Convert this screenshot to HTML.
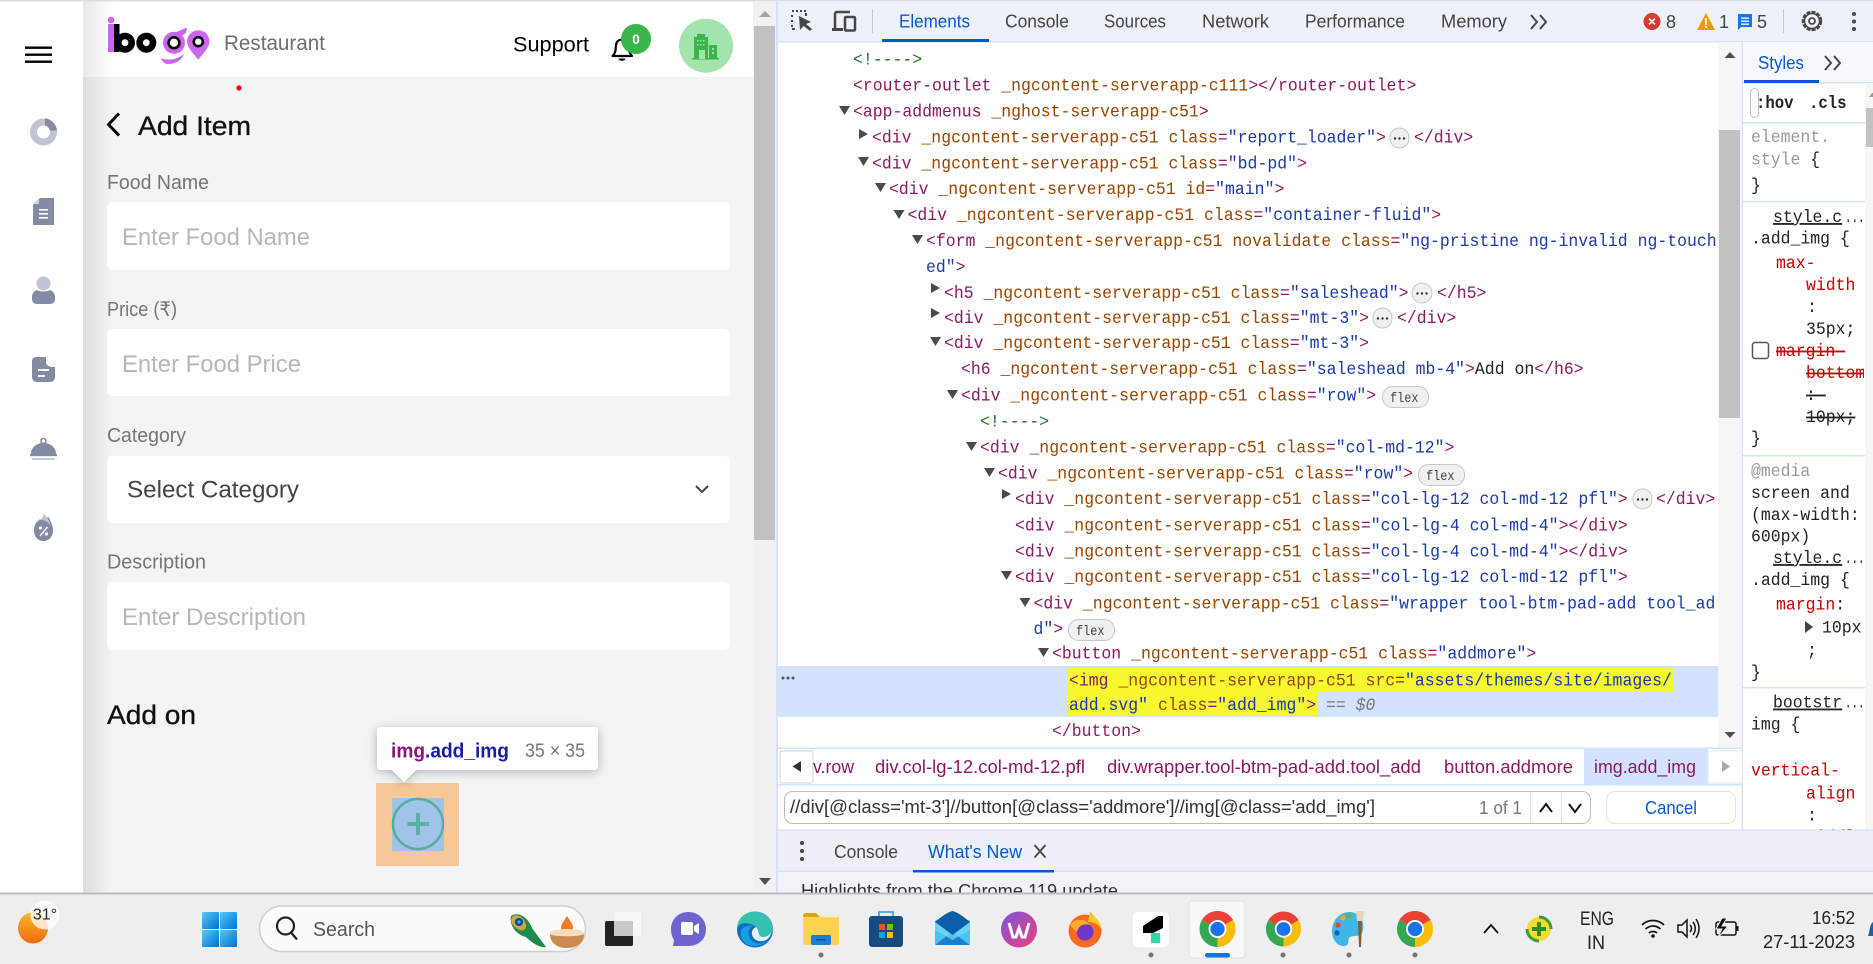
<!DOCTYPE html>
<html><head><meta charset="utf-8"><title>Add Item</title>
<style>
html,body{margin:0;padding:0;width:1873px;height:964px;overflow:hidden;background:#fff}
svg{display:block}
text{white-space:pre}
.s{font-family:"Liberation Sans",sans-serif}
.m{font-family:"Liberation Mono",monospace;font-size:18px}
.t{fill:#8a1a5e}.a{fill:#994500}.v{fill:#1a3aa6}.k{fill:#222}.c{fill:#236e25}.r{fill:#c80000}.g{fill:#999}
</style></head><body>
<svg xmlns="http://www.w3.org/2000/svg" width="1873" height="964" viewBox="0 0 1873 964">
<defs>
<linearGradient id="sh" x1="0" x2="1" y1="0" y2="0"><stop offset="0" stop-color="#000" stop-opacity=".09"/><stop offset="1" stop-color="#000" stop-opacity="0"/></linearGradient>
<linearGradient id="win" x1="0" y1="0" x2="1" y2="1"><stop offset="0" stop-color="#55c8fa"/><stop offset="1" stop-color="#0070cf"/></linearGradient>
<linearGradient id="wea" x1="0" y1="0" x2="0" y2="1"><stop offset="0" stop-color="#f7b62b"/><stop offset="1" stop-color="#f26a0f"/></linearGradient>
<linearGradient id="wps" x1="0" y1="0" x2="1" y2="1"><stop offset="0" stop-color="#7a55e0"/><stop offset="1" stop-color="#ef3f7c"/></linearGradient>
<filter id="ts" x="-20%" y="-40%" width="140%" height="200%"><feDropShadow dx="0" dy="2" stdDeviation="5" flood-color="#000" flood-opacity=".28"/></filter>
<clipPath id="cd"><rect x="778" y="42" width="939" height="706"/></clipPath>
<clipPath id="cs"><rect x="1743" y="83" width="121" height="747"/></clipPath>
<clipPath id="cb"><rect x="780" y="872" width="1093" height="21"/></clipPath>
<symbol id="chrome" viewBox="0 0 48 48">
<path d="M3.2 12A24 24 0 0 1 44.8 12L24 24Z" fill="#ea4335"/>
<path d="M3.2 12A24 24 0 0 0 24 48L24 24Z" fill="#34a853"/>
<path d="M44.8 12A24 24 0 0 1 24 48L24 24Z" fill="#fbbc04"/>
<circle cx="24" cy="24" r="12" fill="#fff"/><circle cx="24" cy="24" r="9.5" fill="#1a73e8"/>
</symbol>
</defs>

<!-- page -->
<rect width="1873" height="964" fill="#fff"/>
<rect x="83" y="0" width="670" height="893" fill="#f4f4f4"/>
<rect x="83" y="1" width="670" height="76" fill="#fff"/>
<rect x="83" y="0" width="30" height="893" fill="url(#sh)"/>
<rect width="1873" height="1.5" fill="#dadce0"/>

<!-- sidebar icons -->
<g fill="#000"><rect x="25" y="46.5" width="27" height="2.4"/><rect x="25" y="53.5" width="27" height="2.4"/><rect x="25" y="60.5" width="27" height="2.4"/></g>
<circle cx="43.5" cy="132" r="10" fill="none" stroke="#bfc3d6" stroke-width="7"/>
<path d="M45 118.3A13.7 13.7 0 0 1 57 130.6L50 130.6A7 7 0 0 0 45 125.2Z" fill="#838ba3"/>
<path d="M40 198H54V225H33V205Z" fill="#838ba3"/><path d="M33 204L39 198V204Z" fill="#cfd2df"/>
<g fill="#fff"><rect x="39" y="209" width="9" height="1.6"/><rect x="39" y="213" width="9" height="1.6"/><rect x="39" y="217" width="9" height="1.6"/></g>
<circle cx="43.5" cy="283.500" r="7" fill="#bfc3d6"/>
<path d="M37 290C40 292 47 292 50 290C53 291 55 294 55 297V299C55 302 53 304 50 304H37C34 304 32 302 32 299V297C32 294 34 291 37 290Z" fill="#838ba3"/>
<path d="M36 357H46V362C46 365 49 367 52 367H55V377C55 380 53 382 50 382H37C34 382 32 380 32 377V361C32 359 34 357 36 357Z" fill="#838ba3"/>
<rect x="38" y="369" width="11" height="2" fill="#fff"/><rect x="38" y="375" width="7" height="2" fill="#fff"/>
<circle cx="43.500" cy="441" r="2.500" fill="none" stroke="#838ba3" stroke-width="1.600"/>
<path d="M31 454C31 447 37 443 43.500 443S56 447 56 454Z" fill="#838ba3"/>
<rect x="30" y="454" width="27" height="2.200" fill="#838ba3"/><rect x="32" y="458" width="23" height="2" fill="#c6c9d8"/>
<path d="M44 513C45 518 48 518 49 517C49 519 53 524 53 530C53 537 49 541 43.500 541S34 537 34 530C34 524 37 522 39 520C40 519 40 519 41 520C42 518 44 516 44 513Z" fill="#838ba3"/>
<path d="M44 513C46 517 50 521 51 526C49 522 45 520 41 520C42 518 44 516 44 513Z" fill="#bfc3d6"/>
<g fill="#fff"><circle cx="40.500" cy="528" r="1.600"/><circle cx="46.500" cy="534" r="1.600"/><path d="M39.500 535.500L47 526.500L48 527.500L40.500 536.500Z"/></g>

<!-- logo -->
<circle cx="111" cy="20" r="3.300" fill="#cc66ee"/>
<rect x="108" y="24" width="6" height="28" fill="#cc66ee"/>
<rect x="114" y="24" width="5.500" height="28" fill="#000"/>
<circle cx="125" cy="42.700" r="6.700" fill="none" stroke="#000" stroke-width="6.600"/>
<circle cx="146.300" cy="42.700" r="6.700" fill="none" stroke="#000" stroke-width="6.600"/>
<circle cx="174" cy="42.700" r="11" fill="#cc66ee"/>
<circle cx="174" cy="42.700" r="5.400" fill="#fff" stroke="#000" stroke-width="2.600"/>
<path d="M174 33L187 27.500L186 33L180 37Z" fill="#cc66ee"/>
<path d="M161 58C168 61 176 60 184 54C182 60 176 64 168 64C164 64 162 61 161 58Z" fill="#cc66ee"/>
<path d="M198.300 30.400C205 30.400 209.500 35.500 209.500 41.500C209.500 47 203 54 198.300 59.500C193.500 54 187 47 187 41.500C187 35.500 192 30.400 198.300 30.400Z" fill="#cc66ee"/>
<circle cx="198.300" cy="41.700" r="4.500" fill="#fff" stroke="#000" stroke-width="2.600"/>
<text class="s" x="224" y="50" font-size="21" fill="#6e6e6e" textLength="101" lengthAdjust="spacingAndGlyphs">Restaurant</text>
<text class="s" x="513" y="51.500" font-size="21.500" fill="#000" textLength="76" lengthAdjust="spacingAndGlyphs">Support</text>
<path d="M612.500 56C617 52 615 47 616.500 43C618 38.500 626 38.500 628 43C629.500 47 628 52 632 56Z" fill="none" stroke="#000" stroke-width="2.200" stroke-linejoin="round"/>
<path d="M618.500 58.500H625.500C625 61.500 619 61.500 618.500 58.500Z" fill="#000"/>
<circle cx="636" cy="39" r="15" fill="#3ab54a"/>
<text class="s" x="636" y="44" font-size="13.500" font-weight="bold" fill="#fff" text-anchor="middle">0</text>
<circle cx="706" cy="45.700" r="27" fill="#a3e4ac"/>
<g fill="#3ab54a"><path d="M694 59V37H697V34H705V37H708V59Z"/><rect x="709" y="45" width="8" height="14"/><rect x="692" y="58" width="27" height="1.500"/></g>
<rect x="699" y="50" width="6" height="9" fill="#a3e4ac"/>
<g fill="#a3e4ac"><rect x="697" y="40" width="1.500" height="1.500"/><rect x="700" y="40" width="1.500" height="1.500"/><rect x="703" y="40" width="1.500" height="1.500"/><rect x="697" y="44" width="1.500" height="1.500"/><rect x="700" y="44" width="1.500" height="1.500"/><rect x="703" y="44" width="1.500" height="1.500"/><rect x="712" y="48" width="2" height="2"/><rect x="712" y="52" width="2" height="2"/></g>
<circle cx="239" cy="88" r="2.700" fill="#e8141c"/>

<!-- form -->
<path d="M119 113.500L108.500 124.500L119 135.500" fill="none" stroke="#000" stroke-width="3"/>
<text class="s" x="138" y="135" font-size="27" fill="#111" stroke="#111" stroke-width=".35" textLength="113" lengthAdjust="spacingAndGlyphs">Add Item</text>
<text class="s" x="107" y="189" font-size="20" fill="#757575" textLength="102" lengthAdjust="spacingAndGlyphs">Food Name</text>
<rect x="107" y="202" width="623" height="68" rx="6" fill="#fff"/>
<text class="s" x="122" y="245" font-size="24" fill="#b7b7b7" textLength="188" lengthAdjust="spacingAndGlyphs">Enter Food Name</text>
<text class="s" x="107" y="316" font-size="20" fill="#757575" textLength="70" lengthAdjust="spacingAndGlyphs">Price (₹)</text>
<rect x="107" y="329" width="623" height="67" rx="6" fill="#fff"/>
<text class="s" x="122" y="372" font-size="24" fill="#b7b7b7" textLength="179" lengthAdjust="spacingAndGlyphs">Enter Food Price</text>
<text class="s" x="107" y="442" font-size="20" fill="#757575" textLength="79" lengthAdjust="spacingAndGlyphs">Category</text>
<rect x="107" y="456" width="623" height="67" rx="6" fill="#fff"/>
<text class="s" x="127" y="497.500" font-size="24" fill="#444" textLength="172" lengthAdjust="spacingAndGlyphs">Select Category</text>
<path d="M696 486L702 492L708 486" fill="none" stroke="#444" stroke-width="2"/>
<text class="s" x="107" y="568.500" font-size="20" fill="#757575" textLength="99" lengthAdjust="spacingAndGlyphs">Description</text>
<rect x="107" y="582" width="623" height="68" rx="6" fill="#fff"/>
<text class="s" x="122" y="625" font-size="24" fill="#b7b7b7" textLength="184" lengthAdjust="spacingAndGlyphs">Enter Description</text>
<text class="s" x="107" y="724" font-size="27" fill="#111" stroke="#111" stroke-width=".35" textLength="89" lengthAdjust="spacingAndGlyphs">Add on</text>

<!-- highlighted img -->
<rect x="376" y="783" width="83" height="83" fill="#f6c898"/>
<rect x="392" y="798" width="52" height="53" fill="#a0c4e8"/>
<circle cx="418" cy="824" r="25" fill="none" stroke="#54ae9f" stroke-width="2.500"/>
<rect x="407.500" y="822" width="21.500" height="4" fill="#5ab0a8"/><rect x="416" y="813" width="4" height="22" fill="#5ab0a8"/>
<g filter="url(#ts)"><path d="M381 727H594A4 4 0 0 1 598 731V766A4 4 0 0 1 594 770H416L404 782L392 770H381A4 4 0 0 1 377 766V731A4 4 0 0 1 381 727Z" fill="#fff"/></g>
<text class="s" x="391" y="757.500" font-size="20" font-weight="bold" textLength="118" lengthAdjust="spacingAndGlyphs"><tspan fill="#881280">img</tspan><tspan fill="#1a1aa6">.add_img</tspan></text>
<text class="s" x="525" y="757" font-size="19" fill="#777" textLength="60" lengthAdjust="spacingAndGlyphs">35 × 35</text>

<!-- page scrollbar -->
<rect x="753" y="1" width="23" height="892" fill="#f1f1f1"/>
<rect x="754" y="26" width="21" height="514" fill="#c1c1c1"/>
<path d="M765 11L771 17H759Z" fill="#a3a3a3"/>
<path d="M759 878H771L765 885Z" fill="#505050"/>

<!-- devtools -->
<rect x="776" y="1" width="1097" height="892" fill="#fff"/>
<rect x="776" y="1" width="2" height="892" fill="#d6e2fb"/>
<rect x="778" y="1" width="1095" height="40.500" fill="#edf1f9"/>
<rect x="778" y="41" width="1095" height="1.500" fill="#d3e3fd"/>
<path d="M792 11H794M796 11H798M800 11H802M804 11H806M792 15V17M792 20V22M792 25V27M792 29H795M806 13V16" stroke="#474747" stroke-width="2" fill="none"/>
<path d="M799 16L800 30L803.500 26L810 31L812 29L806 24L811 22Z" fill="#474747"/>
<path d="M835 29V14C835 12.500 836 12 837 12H850" fill="none" stroke="#474747" stroke-width="2.500"/><rect x="832" y="28" width="11" height="3" fill="#474747"/><rect x="845" y="17" width="10" height="13.500" rx="1" fill="none" stroke="#474747" stroke-width="2.500"/>
<rect x="872" y="9" width="1" height="24" fill="#c4c9d2"/>
<rect x="882" y="39" width="107" height="3" fill="#0b57d0"/>
<text class="s" x="899" y="27.500" font-size="18" fill="#0b57d0" textLength="71" lengthAdjust="spacingAndGlyphs">Elements</text>
<g class="s" font-size="18" fill="#444">
<text x="1005" y="27.500" textLength="64" lengthAdjust="spacingAndGlyphs">Console</text>
<text x="1104" y="27.500" textLength="62" lengthAdjust="spacingAndGlyphs">Sources</text>
<text x="1202" y="27.500" textLength="67" lengthAdjust="spacingAndGlyphs">Network</text>
<text x="1305" y="27.500" textLength="100" lengthAdjust="spacingAndGlyphs">Performance</text>
<text x="1441" y="27.500" textLength="66" lengthAdjust="spacingAndGlyphs">Memory</text>
</g>
<path d="M1531 15L1537 22L1531 29M1540 15L1546 22L1540 29" fill="none" stroke="#474747" stroke-width="2"/>
<circle cx="1652" cy="21.500" r="8.500" fill="#dc362e"/><path d="M1649 18.500L1655 24.500M1655 18.500L1649 24.500" stroke="#fff" stroke-width="1.600"/>
<text class="s" x="1666" y="28" font-size="18" fill="#444" textLength="10" lengthAdjust="spacingAndGlyphs">8</text>
<path d="M1697 30L1706 13L1715 30Z" fill="#f29900"/><rect x="1705" y="18" width="2" height="7" fill="#fff"/><rect x="1705" y="26" width="2" height="2" fill="#fff"/>
<text class="s" x="1711" y="28" font-size="18" fill="#444" dx="8">1</text>
<path d="M1738 14H1752V27H1741L1738 30Z" fill="#1a73e8"/><rect x="1741" y="17.500" width="8" height="1.300" fill="#fff"/><rect x="1741" y="20.500" width="8" height="1.300" fill="#fff"/><rect x="1741" y="23.500" width="8" height="1.300" fill="#fff"/>
<text class="s" x="1757" y="28" font-size="18" fill="#444" textLength="10" lengthAdjust="spacingAndGlyphs">5</text>
<rect x="1783" y="9" width="1" height="24" fill="#c4c9d2"/>
<circle cx="1812" cy="21" r="9" fill="none" stroke="#474747" stroke-width="2.500" stroke-dasharray="4 1.200"/><circle cx="1812" cy="21" r="7.500" fill="none" stroke="#474747" stroke-width="1.500"/><circle cx="1812" cy="21" r="3" fill="none" stroke="#474747" stroke-width="1.800"/>
<g fill="#474747"><circle cx="1854" cy="14" r="2"/><circle cx="1854" cy="21.500" r="2"/><circle cx="1854" cy="29" r="2"/></g>

<!-- DOM tree -->
<rect x="778" y="666" width="940" height="51" fill="#d3e3fd"/>
<rect x="1068" y="668" width="605" height="24" fill="#f8f82f"/>
<rect x="1068" y="692" width="249" height="24" fill="#f8f82f"/>
<g fill="#555"><circle cx="783" cy="678" r="1.500"/><circle cx="788" cy="678" r="1.500"/><circle cx="793" cy="678" r="1.500"/></g>
<g fill="#4a4a4a">
<path d="M839 106H850L844.500 115Z"/><path d="M858 157H869L863.500 166Z"/><path d="M875 183H886L880.500 192Z"/><path d="M893.500 210H904.500L899 219Z"/><path d="M912 235H923L917.500 244Z"/><path d="M930 337H941L935.500 346Z"/><path d="M947 390H958L952.500 399Z"/><path d="M966 442H977L971.500 451Z"/><path d="M984 468H995L989.500 477Z"/><path d="M1001 571H1012L1006.500 580Z"/><path d="M1019.500 598H1030.500L1025 607Z"/><path d="M1038 648H1049L1043.500 657Z"/>
<path d="M859 129L868 134L859 139Z"/><path d="M931 283L940 288L931 293Z"/><path d="M931 308L940 313L931 318Z"/><path d="M1002 489L1011 494L1002 499Z"/>
</g>
<g clip-path="url(#cd)"><g transform="translate(0 -.8)">
<text class="m c" transform="translate(853 65.500) scale(.915 1)">&lt;!----&gt;</text>
<text class="m" transform="translate(853 91.500) scale(.915 1)"><tspan class="t">&lt;router-outlet</tspan><tspan class="a"> _ngcontent-serverapp-c111</tspan><tspan class="t">&gt;&lt;/router-outlet&gt;</tspan></text>
<text class="m" transform="translate(853 117.500) scale(.915 1)"><tspan class="t">&lt;app-addmenus</tspan><tspan class="a"> _nghost-serverapp-c51</tspan><tspan class="t">&gt;</tspan></text>
<text class="m" transform="translate(872 143.500) scale(.915 1)"><tspan class="t">&lt;div</tspan><tspan class="a"> _ngcontent-serverapp-c51 class</tspan><tspan class="t">=</tspan><tspan class="v">"report_loader"</tspan><tspan class="t">&gt;</tspan></text>
<text class="m t" transform="translate(1414 143.500) scale(.915 1)">&lt;/div&gt;</text>
<text class="m" transform="translate(872 169.500) scale(.915 1)"><tspan class="t">&lt;div</tspan><tspan class="a"> _ngcontent-serverapp-c51 class</tspan><tspan class="t">=</tspan><tspan class="v">"bd-pd"</tspan><tspan class="t">&gt;</tspan></text>
<text class="m" transform="translate(889 195) scale(.915 1)"><tspan class="t">&lt;div</tspan><tspan class="a"> _ngcontent-serverapp-c51 id</tspan><tspan class="t">=</tspan><tspan class="v">"main"</tspan><tspan class="t">&gt;</tspan></text>
<text class="m" transform="translate(907.500 221) scale(.915 1)"><tspan class="t">&lt;div</tspan><tspan class="a"> _ngcontent-serverapp-c51 class</tspan><tspan class="t">=</tspan><tspan class="v">"container-fluid"</tspan><tspan class="t">&gt;</tspan></text>
<text class="m" transform="translate(926 247) scale(.915 1)"><tspan class="t">&lt;form</tspan><tspan class="a"> _ngcontent-serverapp-c51 novalidate class</tspan><tspan class="t">=</tspan><tspan class="v">"ng-pristine ng-invalid ng-touch</tspan></text>
<text class="m" transform="translate(926 273) scale(.915 1)"><tspan class="v">ed"</tspan><tspan class="t">&gt;</tspan></text>
<text class="m" transform="translate(944 299) scale(.915 1)"><tspan class="t">&lt;h5</tspan><tspan class="a"> _ngcontent-serverapp-c51 class</tspan><tspan class="t">=</tspan><tspan class="v">"saleshead"</tspan><tspan class="t">&gt;</tspan></text>
<text class="m t" transform="translate(1437 299) scale(.915 1)">&lt;/h5&gt;</text>
<text class="m" transform="translate(944 324) scale(.915 1)"><tspan class="t">&lt;div</tspan><tspan class="a"> _ngcontent-serverapp-c51 class</tspan><tspan class="t">=</tspan><tspan class="v">"mt-3"</tspan><tspan class="t">&gt;</tspan></text>
<text class="m t" transform="translate(1397 324) scale(.915 1)">&lt;/div&gt;</text>
<text class="m" transform="translate(944 349) scale(.915 1)"><tspan class="t">&lt;div</tspan><tspan class="a"> _ngcontent-serverapp-c51 class</tspan><tspan class="t">=</tspan><tspan class="v">"mt-3"</tspan><tspan class="t">&gt;</tspan></text>
<text class="m" transform="translate(961 375) scale(.915 1)"><tspan class="t">&lt;h6</tspan><tspan class="a"> _ngcontent-serverapp-c51 class</tspan><tspan class="t">=</tspan><tspan class="v">"saleshead mb-4"</tspan><tspan class="t">&gt;</tspan><tspan class="k">Add on</tspan><tspan class="t">&lt;/h6&gt;</tspan></text>
<text class="m" transform="translate(961 401.500) scale(.915 1)"><tspan class="t">&lt;div</tspan><tspan class="a"> _ngcontent-serverapp-c51 class</tspan><tspan class="t">=</tspan><tspan class="v">"row"</tspan><tspan class="t">&gt;</tspan></text>
<text class="m c" transform="translate(980 427.500) scale(.915 1)">&lt;!----&gt;</text>
<text class="m" transform="translate(980 453.500) scale(.915 1)"><tspan class="t">&lt;div</tspan><tspan class="a"> _ngcontent-serverapp-c51 class</tspan><tspan class="t">=</tspan><tspan class="v">"col-md-12"</tspan><tspan class="t">&gt;</tspan></text>
<text class="m" transform="translate(998 479.500) scale(.915 1)"><tspan class="t">&lt;div</tspan><tspan class="a"> _ngcontent-serverapp-c51 class</tspan><tspan class="t">=</tspan><tspan class="v">"row"</tspan><tspan class="t">&gt;</tspan></text>
<text class="m" transform="translate(1015 505) scale(.915 1)"><tspan class="t">&lt;div</tspan><tspan class="a"> _ngcontent-serverapp-c51 class</tspan><tspan class="t">=</tspan><tspan class="v">"col-lg-12 col-md-12 pfl"</tspan><tspan class="t">&gt;</tspan></text>
<text class="m t" transform="translate(1656 505) scale(.915 1)">&lt;/div&gt;</text>
<text class="m" transform="translate(1015 531.500) scale(.915 1)"><tspan class="t">&lt;div</tspan><tspan class="a"> _ngcontent-serverapp-c51 class</tspan><tspan class="t">=</tspan><tspan class="v">"col-lg-4 col-md-4"</tspan><tspan class="t">&gt;&lt;/div&gt;</tspan></text>
<text class="m" transform="translate(1015 557.500) scale(.915 1)"><tspan class="t">&lt;div</tspan><tspan class="a"> _ngcontent-serverapp-c51 class</tspan><tspan class="t">=</tspan><tspan class="v">"col-lg-4 col-md-4"</tspan><tspan class="t">&gt;&lt;/div&gt;</tspan></text>
<text class="m" transform="translate(1015 583) scale(.915 1)"><tspan class="t">&lt;div</tspan><tspan class="a"> _ngcontent-serverapp-c51 class</tspan><tspan class="t">=</tspan><tspan class="v">"col-lg-12 col-md-12 pfl"</tspan><tspan class="t">&gt;</tspan></text>
<text class="m" transform="translate(1033.500 609.500) scale(.915 1)"><tspan class="t">&lt;div</tspan><tspan class="a"> _ngcontent-serverapp-c51 class</tspan><tspan class="t">=</tspan><tspan class="v">"wrapper tool-btm-pad-add tool_ad</tspan></text>
<text class="m" transform="translate(1033.500 635) scale(.915 1)"><tspan class="v">d"</tspan><tspan class="t">&gt;</tspan></text>
<text class="m" transform="translate(1052 659.500) scale(.915 1)"><tspan class="t">&lt;button</tspan><tspan class="a"> _ngcontent-serverapp-c51 class</tspan><tspan class="t">=</tspan><tspan class="v">"addmore"</tspan><tspan class="t">&gt;</tspan></text>
<text class="m" transform="translate(1069 686.500) scale(.915 1)"><tspan class="t">&lt;img</tspan><tspan class="a"> _ngcontent-serverapp-c51 src</tspan><tspan class="t">=</tspan><tspan class="v">"assets/themes/site/images/</tspan></text>
<text class="m" transform="translate(1069 711) scale(.915 1)"><tspan class="v">add.svg"</tspan><tspan class="a"> class</tspan><tspan class="t">=</tspan><tspan class="v">"add_img"</tspan><tspan class="t">&gt;</tspan><tspan fill="#777"> == </tspan><tspan fill="#777" font-style="italic">$0</tspan></text>
<text class="m t" transform="translate(1052 737) scale(.915 1)">&lt;/button&gt;</text>
</g></g>
<!-- adorners -->
<g fill="#f0f0f0" stroke="#c7c7c7">
<rect x="1390" y="128" width="19" height="20" rx="9.500"/><rect x="1412" y="283" width="20" height="20" rx="10"/><rect x="1373" y="308" width="19" height="20" rx="9.500"/><rect x="1633" y="489" width="19" height="20" rx="9.500"/>
<rect x="1382.500" y="386.500" width="46" height="21" rx="10"/><rect x="1418.500" y="464.500" width="46" height="21" rx="10"/><rect x="1068.500" y="619.500" width="46" height="21" rx="10"/>
</g>
<g fill="#333"><circle cx="1395" cy="138.500" r="1.200"/><circle cx="1399.500" cy="138.500" r="1.200"/><circle cx="1404" cy="138.500" r="1.200"/><circle cx="1417.500" cy="293.500" r="1.200"/><circle cx="1422" cy="293.500" r="1.200"/><circle cx="1426.500" cy="293.500" r="1.200"/><circle cx="1378" cy="318.500" r="1.200"/><circle cx="1382.500" cy="318.500" r="1.200"/><circle cx="1387" cy="318.500" r="1.200"/><circle cx="1638" cy="499.500" r="1.200"/><circle cx="1642.500" cy="499.500" r="1.200"/><circle cx="1647" cy="499.500" r="1.200"/></g>
<g class="m" style="font-size:14px" fill="#444">
<text transform="translate(1390 402) scale(.85 1)">flex</text><text transform="translate(1426 480) scale(.85 1)">flex</text><text transform="translate(1076 635) scale(.85 1)">flex</text>
</g>
<!-- DOM scrollbar -->
<rect x="1718" y="42" width="23" height="706" fill="#f6f6f6"/>
<rect x="1719" y="130" width="21" height="288" fill="#c1c1c1"/>
<path d="M1730 52L1735.500 58H1724.500Z" fill="#505050"/>
<path d="M1724.500 732H1735.500L1730 738Z" fill="#505050"/>
<rect x="1741.500" y="41" width="1.500" height="789" fill="#d3e3fd"/>

<!-- breadcrumbs -->
<rect x="778" y="747.500" width="964" height="1.500" fill="#d3e3fd"/>
<rect x="1584" y="749" width="124" height="35" fill="#d3e3fd"/>
<rect x="780" y="751" width="33" height="32" rx="2" fill="#fff" stroke="#cfd3da"/>
<path d="M801 761V772L792.500 766.500Z" fill="#333"/>
<rect x="1708" y="751" width="34" height="32" fill="#fff" stroke="#e4e7ee"/>
<path d="M1722 761L1730 766.500L1722 772Z" fill="#aaa"/>
<g class="s" font-size="18" fill="#881a68">
<text x="813" y="773" textLength="41" lengthAdjust="spacingAndGlyphs">v.row</text>
<text x="875" y="773" textLength="210" lengthAdjust="spacingAndGlyphs">div.col-lg-12.col-md-12.pfl</text>
<text x="1107" y="773" textLength="314" lengthAdjust="spacingAndGlyphs">div.wrapper.tool-btm-pad-add.tool_add</text>
<text x="1444" y="773" textLength="129" lengthAdjust="spacingAndGlyphs">button.addmore</text>
<text x="1594" y="773" textLength="102" lengthAdjust="spacingAndGlyphs">img.add_img</text>
</g>
<rect x="778" y="784" width="964" height="1.500" fill="#d3e3fd"/>
<!-- search bar -->
<rect x="784.500" y="791.500" width="806" height="32" rx="8" fill="#fff" stroke="#b9bdc2"/>
<text class="s" x="790" y="813" font-size="18" fill="#333" textLength="585" lengthAdjust="spacingAndGlyphs">//div[@class='mt-3']//button[@class='addmore']//img[@class='add_img']</text>
<text class="s" x="1479" y="814" font-size="18" fill="#777" textLength="43" lengthAdjust="spacingAndGlyphs">1 of 1</text>
<rect x="1530" y="792" width="1" height="31" fill="#dfe1e5"/><rect x="1561" y="792" width="1" height="31" fill="#dfe1e5"/>
<path d="M1540 812L1546 804L1552 812M1569 804L1575 812L1581 804" fill="none" stroke="#111" stroke-width="2"/>
<rect x="1606.500" y="791.500" width="129" height="32" rx="8" fill="#fff" stroke="#dfe1e5"/>
<text class="s" x="1645" y="814" font-size="18" fill="#0b57d0" textLength="52" lengthAdjust="spacingAndGlyphs">Cancel</text>

<!-- styles pane -->
<rect x="1743" y="42" width="130" height="40" fill="#f8f9fd"/>
<rect x="1743" y="82" width="130" height="1.500" fill="#d3e3fd"/>
<rect x="1744" y="80" width="75" height="3" fill="#0b57d0"/>
<text class="s" x="1758" y="69" font-size="18" fill="#0b57d0" textLength="46" lengthAdjust="spacingAndGlyphs">Styles</text>
<path d="M1825 56L1831 63L1825 70M1834 56L1840 63L1834 70" fill="none" stroke="#474747" stroke-width="2"/>
<rect x="1750.500" y="88.500" width="8" height="29" rx="4" fill="#fff" stroke="#b9bdc2"/>
<text class="m" font-weight="bold" fill="#222" transform="translate(1756 108) scale(.87 1)" style="font-size:18px">:hov</text>
<text class="m" font-weight="bold" fill="#222" transform="translate(1809 108) scale(.87 1)" style="font-size:18px">.cls</text>
<g fill="#d3e3fd"><rect x="1743" y="122" width="122" height="1.500"/><rect x="1743" y="201" width="122" height="1.500"/><rect x="1743" y="455" width="122" height="1.500"/><rect x="1743" y="687" width="122" height="1.500"/></g>
<g clip-path="url(#cs)">
<text class="m g" transform="translate(1751 142) scale(.915 1)">element.</text>
<text class="m" transform="translate(1751 164.500) scale(.915 1)"><tspan class="g">style </tspan><tspan class="k">{</tspan></text>
<text class="m k" transform="translate(1751 190.500) scale(.915 1)">}</text>
<text class="m k" text-decoration="underline" transform="translate(1773 222) scale(.915 1)">style.c</text>
<text class="m k" transform="translate(1845 222) scale(.6 1)">...</text>
<text class="m k" transform="translate(1751 243.500) scale(.915 1)">.add_img {</text>
<text class="m r" transform="translate(1776 268) scale(.915 1)">max-</text>
<text class="m r" transform="translate(1806 290) scale(.915 1)">width</text>
<text class="m k" transform="translate(1807 312) scale(.915 1)">:</text>
<text class="m k" transform="translate(1806 334) scale(.915 1)">35px;</text>
<rect x="1752.500" y="342.500" width="16" height="16" rx="2.500" fill="#fff" stroke="#555" stroke-width="1.500"/>
<text class="m r" text-decoration="line-through" transform="translate(1776 356) scale(.915 1)">margin-</text>
<text class="m r" text-decoration="line-through" transform="translate(1806 378) scale(.915 1)">bottom</text>
<text class="m k" text-decoration="line-through" transform="translate(1806 400) scale(.915 1)">: </text>
<text class="m k" text-decoration="line-through" transform="translate(1806 422) scale(.915 1)">10px;</text>
<text class="m k" transform="translate(1751 443.500) scale(.915 1)">}</text>
<text class="m g" transform="translate(1751 476) scale(.915 1)">@media</text>
<text class="m k" transform="translate(1751 498) scale(.915 1)">screen and</text>
<text class="m k" transform="translate(1751 520) scale(.915 1)">(max-width:</text>
<text class="m k" transform="translate(1751 541.500) scale(.915 1)">600px)</text>
<text class="m k" text-decoration="underline" transform="translate(1773 563) scale(.915 1)">style.c</text>
<text class="m k" transform="translate(1845 563) scale(.6 1)">...</text>
<text class="m k" transform="translate(1751 585) scale(.915 1)">.add_img {</text>
<text class="m" transform="translate(1776 609.500) scale(.915 1)"><tspan class="r">margin</tspan><tspan class="k">:</tspan></text>
<path d="M1805 621L1813 627L1805 633Z" fill="#444"/>
<text class="m k" transform="translate(1822 632.500) scale(.915 1)">10px</text>
<text class="m k" transform="translate(1807 655.500) scale(.915 1)">;</text>
<text class="m k" transform="translate(1751 677.500) scale(.915 1)">}</text>
<text class="m k" text-decoration="underline" transform="translate(1773 707.500) scale(.915 1)">bootstr</text>
<text class="m k" transform="translate(1845 707.500) scale(.6 1)">...</text>
<text class="m k" transform="translate(1751 729.500) scale(.915 1)">img {</text>
<text class="m r" transform="translate(1751 775.500) scale(.915 1)">vertical-</text>
<text class="m r" transform="translate(1806 798.500) scale(.915 1)">align</text>
<text class="m k" transform="translate(1807 820.500) scale(.915 1)">:</text>
<text class="m k" transform="translate(1806 842) scale(.915 1)">middle;</text>
</g>
<rect x="1865" y="83" width="8" height="747" fill="#f6f6f6"/>
<rect x="1866" y="108" width="7" height="39" fill="#c1c1c1"/>
<path d="M1872 93L1869 97H1873V93Z" fill="#999"/>

<!-- bottom drawer -->
<rect x="778" y="830" width="1095" height="42" fill="#edf0f6"/>
<rect x="778" y="829.500" width="1095" height="1.500" fill="#d3e3fd"/>
<rect x="778" y="872" width="1095" height="21" fill="#f1f3f8"/>
<rect x="778" y="870.500" width="1095" height="1.500" fill="#d3e3fd"/>
<rect x="913" y="870" width="141" height="2.500" fill="#0b57d0"/>
<g fill="#474747"><circle cx="802" cy="843" r="2"/><circle cx="802" cy="851" r="2"/><circle cx="802" cy="859" r="2"/></g>
<text class="s" x="834" y="858" font-size="18" fill="#444" textLength="64" lengthAdjust="spacingAndGlyphs">Console</text>
<text class="s" x="928" y="858" font-size="18" fill="#0b57d0" textLength="94" lengthAdjust="spacingAndGlyphs">What's New</text>
<path d="M1034.500 845L1045.500 857.500M1045.500 845L1034.500 857.500" stroke="#444" stroke-width="1.800"/>
<g clip-path="url(#cb)"><text class="s" x="801" y="897" font-size="18" fill="#333" textLength="317" lengthAdjust="spacingAndGlyphs">Highlights from the Chrome 119 update</text></g>

<!-- taskbar -->
<rect x="0" y="893" width="1873" height="71" fill="#eeeeee"/>
<rect x="0" y="892.500" width="1873" height="2" fill="#bdbdbd"/>
<ellipse cx="33" cy="928" rx="15" ry="15.500" fill="url(#wea)"/>
<circle cx="45" cy="915" r="14.500" fill="#fff" fill-opacity=".75"/>
<text class="s" x="45" y="919.500" font-size="16" fill="#222" text-anchor="middle">31°</text>
<g fill="url(#win)"><rect x="202" y="912" width="17" height="17" rx="1"/><rect x="220" y="912" width="17" height="17" rx="1"/><rect x="202" y="930" width="17" height="17" rx="1"/><rect x="220" y="930" width="17" height="17" rx="1"/></g>
<rect x="259.500" y="906" width="326" height="45.500" rx="22.700" fill="#fbfbfb" stroke="#cfcfcf" stroke-width="1.500"/>
<circle cx="285.500" cy="926" r="8.500" fill="none" stroke="#222" stroke-width="2.200"/><path d="M291.500 933L297 939.500" stroke="#222" stroke-width="2.200"/>
<text class="s" x="313" y="936" font-size="20" fill="#555" textLength="62" lengthAdjust="spacingAndGlyphs">Search</text>
<!-- feather & diya -->
<path d="M511 916C518 911 528 917 532 928L546 947C540 948 532 943 526 937C517 935 509 926 511 916Z" fill="#1f8a4a"/>
<path d="M512 917C516 913 524 916 526 925C527 931 520 932 516 928C512 925 510 921 512 917Z" fill="#c9a93b"/>
<circle cx="519" cy="922" r="4" fill="#0d3fb0"/><circle cx="519" cy="922" r="1.600" fill="#25c1e8"/>
<path d="M567 916C570 921 573 924 573 928C573 932 570 933 567 933S561 932 561 928C561 924 564 921 567 916Z" fill="#f57c1f"/>
<ellipse cx="567" cy="933" rx="17" ry="4" fill="#f2dcc0"/>
<path d="M550 934C553 937 581 937 584 934C584 942 578 948 567 948S550 942 550 934Z" fill="#cc8a4e"/>
<!-- task view -->
<rect x="605" y="921" width="28" height="25" rx="2" fill="#222"/>
<rect x="614" y="912" width="27" height="24" rx="2" fill="#fafafa" fill-opacity=".75"/>
<rect x="614" y="921" width="19" height="15" fill="#c8c8c8"/>
<!-- meet -->
<path d="M688 912C699 912 706 920 706 929C706 940 698 946 688 946H673L674 940C672 937 671 933 671 929C671 920 678 912 688 912Z" fill="#6f63cf"/>
<rect x="681" y="922" width="12" height="13" rx="2" fill="#fff"/><path d="M694 926L699 923V934L694 931Z" fill="#fff"/>
<!-- edge -->
<circle cx="755" cy="929.500" r="18" fill="#0c6fc0"/>
<path d="M737 929C737 917 747 911.500 755 911.500C766 911.500 773 920 773 928C773 934 768 937 763 937C756 937 760 931 756 927C750 922 739 921 737 929Z" fill="#35c1b1"/>
<path d="M756 927C751 924 747 930 749 936C751 943 761 948 771 938C766 946 745 952 741 936C739 928 747 923 756 927Z" fill="#1b9de2"/>
<path d="M756 927C760 931 757 937 763 937C767 937 769 935 771 933C770 940 762 943 756 940C750 936 751 929 756 927Z" fill="#fff" fill-opacity=".9"/>
<!-- folder -->
<path d="M803 916C803 914 804 913 806 913H816L820 917H803Z" fill="#e0a412"/>
<rect x="803" y="917" width="36" height="28" rx="1.500" fill="#fdd34f"/>
<rect x="811" y="935" width="20" height="10" rx="2" fill="#1a7fd0"/><rect x="816" y="939" width="10" height="1.500" fill="#0d4f90"/>
<circle cx="821" cy="955" r="2.500" fill="#757575"/>
<!-- store -->
<path d="M879 917V912H893V917" fill="none" stroke="#27b2e8" stroke-width="1.800"/>
<rect x="869" y="916" width="34" height="31" rx="3" fill="#174a80"/>
<rect x="879" y="924" width="6" height="6" fill="#f25022"/><rect x="887" y="924" width="6" height="6" fill="#7fba00"/><rect x="879" y="932" width="6" height="6" fill="#00a4ef"/><rect x="887" y="932" width="6" height="6" fill="#ffb900"/>
<!-- mail -->
<rect x="935" y="920" width="35" height="25" rx="2" fill="#49c3f2"/>
<path d="M935 945L952 932L970 945Z" fill="#1b7fd0"/>
<path d="M935 922C940 918 947 912 952.500 911C958 912 965 918 970 922L952.500 935Z" fill="#0b5ea8"/>
<path d="M935 922L952.500 935L970 922V930L952.500 940L935 930Z" fill="#7bd8f8" fill-opacity=".7"/>
<!-- wps -->
<circle cx="1019" cy="929.500" r="18" fill="url(#wps)"/>
<path d="M1009 923L1013 937H1016L1019 928L1022 937H1025L1029 923" fill="none" stroke="#fff" stroke-width="3"/>
<!-- firefox -->
<circle cx="1085" cy="931" r="16.500" fill="#f66b21"/>
<path d="M1090 911C1094 917 1102 922 1102 931C1100 925 1095 922 1088 922Z" fill="#ffc629"/>
<circle cx="1085" cy="932" r="8.500" fill="#7136c7"/>
<path d="M1070 925C1076 917 1086 919 1090 925C1084 923 1078 926 1077 932Z" fill="#ffaa2a"/>
<!-- tile app -->
<rect x="1133" y="912" width="36" height="35" rx="5" fill="#fff"/>
<path d="M1158 916H1163V928L1153 933H1143V926Z" fill="#000"/>
<rect x="1151" y="933" width="9" height="10" fill="#2ed6a4"/>
<circle cx="1151" cy="955" r="2.500" fill="#757575"/>
<!-- active chrome -->
<rect x="1189" y="901" width="56" height="57" rx="4" fill="#f8f8f8" stroke="#e2e2e2"/>
<use href="#chrome" x="1199" y="911" width="37" height="36"/>
<rect x="1205" y="953" width="25" height="4.500" rx="2.200" fill="#0a78d4"/>
<use href="#chrome" x="1266" y="911" width="35" height="36"/>
<circle cx="1283" cy="955" r="2.500" fill="#757575"/>
<!-- palette -->
<path d="M1350 912C1339 912 1332 921 1332 931C1332 941 1339 947 1345 946C1350 945 1347 939 1350 937C1355 935 1360 937 1362 933C1366 925 1361 912 1350 912Z" fill="#3fb6e8"/>
<circle cx="1343" cy="918" r="2.600" fill="#f5a623"/><circle cx="1349" cy="916" r="2.600" fill="#67b346"/><circle cx="1338" cy="925" r="2.600" fill="#e8452c"/><circle cx="1337" cy="933" r="2.600" fill="#1a5fb0"/>
<path d="M1358 920H1362L1361 947H1359Z" fill="#8a5a2b"/><path d="M1356 911H1364L1363 921H1357Z" fill="#e6d5b8"/>
<circle cx="1349" cy="955" r="2.500" fill="#757575"/>
<use href="#chrome" x="1397" y="911" width="36" height="36"/>
<circle cx="1415" cy="955" r="2.500" fill="#757575"/>
<!-- tray -->
<path d="M1484 933L1491 925L1498 933" fill="none" stroke="#111" stroke-width="1.800"/>
<circle cx="1539" cy="929" r="12" fill="#f2dc30"/>
<path d="M1539 917A12 12 0 0 1 1551 929M1539 941A12 12 0 0 1 1527 929" fill="none" stroke="#3a9d3a" stroke-width="3"/>
<rect x="1537" y="922" width="4" height="14" fill="#2a8d2a"/><rect x="1532" y="927" width="14" height="4" fill="#2a8d2a"/>
<text class="s" x="1580" y="925" font-size="19" fill="#222" textLength="34" lengthAdjust="spacingAndGlyphs">ENG</text>
<text class="s" x="1587" y="949" font-size="19" fill="#222" textLength="18" lengthAdjust="spacingAndGlyphs">IN</text>
<path d="M1642 925C1648 919 1658 919 1664 925M1645.500 929C1650 925 1656 925 1660.500 929M1649 933C1651 931 1655 931 1657 933" fill="none" stroke="#111" stroke-width="1.700"/><circle cx="1653" cy="936" r="1.800" fill="#111"/>
<path d="M1678 925H1682L1687 920V937L1682 932H1678Z" fill="none" stroke="#111" stroke-width="1.500"/>
<path d="M1690 925C1692 927 1692 930 1690 932M1693 922C1696 926 1696 931 1693 935M1696 919C1700 925 1700 932 1696 938" fill="none" stroke="#111" stroke-width="1.500"/>
<rect x="1716" y="922" width="20" height="13" rx="2" fill="none" stroke="#111" stroke-width="1.500"/><rect x="1736.500" y="926" width="2" height="5" fill="#111"/>
<path d="M1722 918L1716 929H1722L1717 939L1728 926H1722L1727 918Z" fill="#111" stroke="#eee"/>
<text class="s" x="1855" y="924" font-size="18" fill="#222" text-anchor="end" textLength="43" lengthAdjust="spacingAndGlyphs">16:52</text>
<text class="s" x="1855" y="948" font-size="18" fill="#222" text-anchor="end" textLength="92" lengthAdjust="spacingAndGlyphs">27-11-2023</text>
<path d="M1868 936C1870 932 1869 925 1873 922V936Z" fill="#1a5fb0"/>
</svg>
</body></html>
